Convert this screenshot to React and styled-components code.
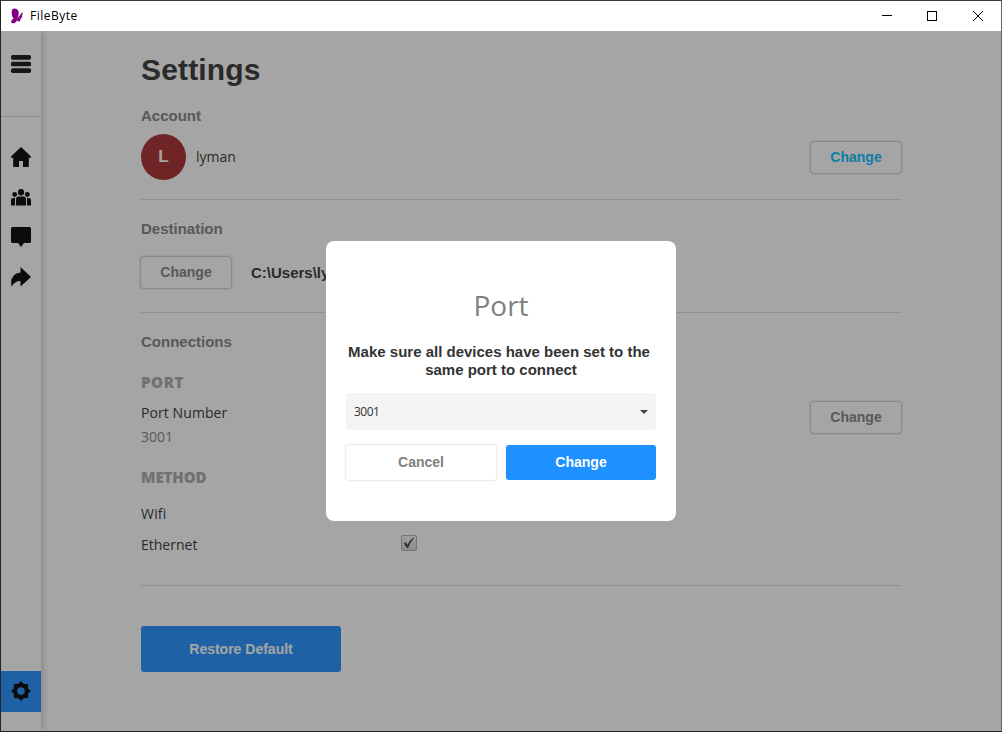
import React from "react";
import styled, { createGlobalStyle, css } from "styled-components";

const GlobalStyle = createGlobalStyle`
  *, *::before, *::after { box-sizing: border-box; }
  body { margin: 0; overflow: hidden; background: #231f20; }
  h1, h2, h3, p { margin: 0; }
  button { font: inherit; }
`;

const humanist = `"Open Sans", "Noto Sans", sans-serif`;
const grotesk = `"Liberation Sans", Arial, sans-serif`;

const Window = styled.div`
  width: 1002px;
  height: 732px;
  display: flex;
  flex-direction: column;
  border: 1px solid #262324;
  border-right-color: #656565;
  border-top-color: #3a3839;
  font-family: ${grotesk};
  color: #333;
`;

const TitleBar = styled.header`
  flex: 0 0 30px;
  display: flex;
  align-items: center;
  background: #fff;
  padding-left: 9px;
`;

const AppName = styled.span`
  flex: 1;
  margin-left: 6px;
  font: 12px/16px ${humanist};
  letter-spacing: 0.5px;
  color: #000;
`;

const WindowButton = styled.button`
  width: 46px;
  height: 30px;
  padding: 0;
  border: 0;
  background: none;
  display: grid;
  place-items: center;
`;

const Body = styled.div`
  position: relative;
  flex: 1;
  display: flex;
  background: #fff;
  overflow: hidden;
`;

const Sidebar = styled.nav`
  flex: 0 0 40px;
  display: flex;
  flex-direction: column;
  background: #fff;
  box-shadow: 0 0 8px rgba(0, 0, 0, 0.3);
`;

const MenuArea = styled.div`
  height: 86px;
  border-bottom: 1px solid #d8d8d8;
  display: flex;
  justify-content: center;
  padding-top: 24px;
  margin-bottom: 20px;
`;

const NavItem = styled.div`
  height: 40px;
  display: grid;
  place-items: center;
  ${(p) => p.$active && css`
    height: 41px;
    margin: auto 0 19px;
    padding-bottom: 1px;
    background: #1e90ff;
  `}
`;

const Main = styled.main`
  flex: 1;
  padding: 21px 100px 0;
`;

const PageTitle = styled.h1`
  height: 55px;
  font-size: 30px;
  line-height: 36px;
  letter-spacing: 0.15px;
`;

const Section = styled.section`
  height: ${(p) => p.$height}px;
  border-bottom: 1px solid #dcdcdc;
  margin-bottom: 20px;
`;

const SectionTitle = styled.h2`
  font-size: 15px;
  line-height: 18px;
  color: #808080;
`;

const Row = styled.div`
  display: flex;
  align-items: ${(p) => p.$align || "center"};
  height: ${(p) => p.$height}px;
  margin-top: ${(p) => p.$top || 0}px;
`;

const Avatar = styled.div`
  width: 45px;
  height: 46px;
  border-radius: 50%;
  background: brown;
  color: #fff;
  display: grid;
  place-items: center;
  font-size: 17px;
  font-weight: bold;
  margin-right: 10px;
`;

const Label = styled.span`
  font: 14px/20px ${humanist};
  letter-spacing: ${(p) => p.$spacing || 0}px;
  color: ${(p) => (p.$muted ? "#808080" : "#333")};
`;

const Path = styled.span`
  margin-left: 19px;
  font-size: 15px;
  line-height: 18px;
  font-weight: bold;
`;

const OutlineButton = styled.button`
  width: 92px;
  height: 33px;
  padding: 0 0 1px;
  margin-top: ${(p) => p.$top || 0}px;
  margin-left: ${(p) => (p.$end ? "auto" : "-1px")};
  margin-right: ${(p) => (p.$end ? "-1px" : 0)};
  border: 1px solid #d0d0d0;
  border-radius: 4px;
  background: #fff;
  box-shadow: 0 0 2px rgba(0, 0, 0, 0.2);
  font-size: 14px;
  font-weight: bold;
  color: ${(p) => (p.$accent ? "#00bfff" : "#808080")};
`;

const GroupTitle = styled.h3`
  font: 800 15px/20px ${humanist};
  letter-spacing: ${(p) => p.$spacing}px;
  color: #a9a9a9;
  margin-top: ${(p) => p.$top}px;
`;

const Stack = styled.div`
  display: flex;
  flex-direction: column;
  gap: 4px;
`;

const MethodRow = styled.div`
  display: grid;
  grid-template-columns: 260px 16px;
  align-items: center;
  height: 31px;
`;

const Checkbox = styled.span`
  width: 16px;
  height: 16px;
  margin-top: -4px;
  border: 1px solid #adadad;
  border-radius: 2px;
  background: linear-gradient(#f4f4f4, #d6d6d6);
  display: grid;
  place-items: center;
`;

const PrimaryButton = styled.button`
  width: ${(p) => p.$width}px;
  height: ${(p) => p.$height}px;
  padding: 0 0 ${(p) => p.$lift || 0}px;
  border: 0;
  border-radius: 3px;
  background: #1e90ff;
  color: #fff;
  font-size: 14px;
  font-weight: bold;
`;

const Overlay = styled.div`
  position: absolute;
  inset: 0;
  background: rgba(30, 30, 30, 0.4);
  display: flex;
  align-items: center;
  justify-content: center;
`;

const Dialog = styled.div`
  width: 350px;
  height: 280px;
  border-radius: 8px;
  background: #fff;
  padding: 43px 20px 0;
  display: flex;
  flex-direction: column;
`;

const DialogTitle = styled.h2`
  font: 400 28px/42px ${humanist};
  color: #808080;
  text-align: center;
`;

const DialogText = styled.p`
  margin: 17px -5px 0;
  font-size: 15px;
  line-height: 18px;
  font-weight: bold;
  text-align: center;

  span { margin-right: 4px; }
`;

const Select = styled.div`
  height: 37px;
  margin-top: 14px;
  padding: 0 8px;
  display: flex;
  align-items: center;
  justify-content: space-between;
  border-radius: 3px;
  background: #f4f4f4;
  font: 12px/18px ${humanist};
  letter-spacing: -0.5px;
`;

const Actions = styled.div`
  display: flex;
  justify-content: space-between;
  align-items: center;
  margin-top: 15px;
`;

const CancelButton = styled.button`
  width: 150px;
  height: 35px;
  padding: 0 0 2px;
  border: 0;
  border-radius: 3px;
  background: #fff;
  box-shadow: 0 0 0 1px #ececec, 0 0 3px rgba(0, 0, 0, 0.12);
  color: #808080;
  font-size: 14px;
  font-weight: bold;
`;

const Logo = () => (
  <svg width="14" height="18" viewBox="0 0 14 18" fill="#800080">
    <path d="M2.200 2.500C3.500.5 7.800 1.500 8.600 4.500c.4 2 .2 3.500-.8 5.300.2 2.500-.8 4.500-2.800 5.900-1.500 1-3.800.8-3.800-.7 0-1.500 1-2.800 2.500-3.600C1.500 9.700 1.300 4.500 2.200 2.500Z" />
    <path d="M7 13.500 12.500 6M8.800 9.500v5L12 8.500" stroke="#800080" strokeWidth="1.300" fill="none" />
  </svg>
);

const MenuIcon = () => (
  <svg width="20" height="18" viewBox="0 0 20 18" fill="#111">
    <rect width="20" height="4.700" rx="1.700" />
    <rect y="6.800" width="20" height="4.400" rx="1.500" />
    <rect y="13.300" width="20" height="4.700" rx="1.700" />
  </svg>
);

const HomeIcon = () => (
  <svg width="20" height="20" viewBox="0 0 20 20">
    <path d="M10 0 20 9.500v1.300h-2.200V20H12v-6H8v6H2.200v-9.200H0V9.500Z" />
  </svg>
);

const PeopleIcon = () => (
  <svg width="20" height="17" viewBox="0 0 20 17">
    <ellipse cx="10" cy="3.300" rx="3.100" ry="3.200" />
    <circle cx="3.700" cy="5.500" r="2.400" />
    <circle cx="16.300" cy="5.500" r="2.400" />
    <path d="M5 16.500v-6.300Q5 7.500 7.500 7.500h5Q15 7.500 15 10.200v6.300Z" />
    <path d="M0 16.500v-5.300Q0 9 2.200 9H4v7.500ZM20 16.500v-5.300Q20 9 17.800 9H16v7.500Z" />
  </svg>
);

const ChatIcon = () => (
  <svg width="20" height="20" viewBox="0 0 20 20">
    <path d="M1.500 0h17Q20 0 20 1.500v13q0 1.500-1.500 1.500H13l-3 4-3-4H1.500Q0 16 0 14.500v-13Q0 0 1.500 0Z" />
  </svg>
);

const ShareIcon = () => (
  <svg width="20" height="20" viewBox="0 0 20 20">
    <path d="M9.500 0 20 10 9.500 19.500V14q-5-.5-9 5.500Q-1.500 6.500 9.500 5.500Z" />
  </svg>
);

const GearIcon = () => (
  <svg width="20" height="20" viewBox="0 0 20 20" fillRule="evenodd">
    <path d="M10 0 12.600 2.800 17.100 2.900 17.200 7.400 20 10 17.200 12.600 17.100 17.100 12.600 17.200 10 20 7.400 17.200 2.900 17.100 2.800 12.600 0 10 2.800 7.400 2.900 2.900 7.400 2.800ZM10 6.200a3.800 3.800 0 1 0 0 7.600a3.800 3.800 0 1 0 0-7.600Z" />
  </svg>
);

const navIcons = [HomeIcon, PeopleIcon, ChatIcon, ShareIcon];

export default function App() {
  return (
    <Window>
      <GlobalStyle />
      <TitleBar>
        <Logo />
        <AppName>FileByte</AppName>
        <WindowButton aria-label="Minimize">
          <svg width="11" height="10"><path d="M1 4.500h10" stroke="#000" /></svg>
        </WindowButton>
        <WindowButton aria-label="Maximize">
          <svg width="10" height="10"><rect x=".5" y=".5" width="9" height="9" fill="none" stroke="#000" /></svg>
        </WindowButton>
        <WindowButton aria-label="Close">
          <svg width="10" height="10"><path d="m0 0 10 10M10 0 0 10" stroke="#000" /></svg>
        </WindowButton>
      </TitleBar>
      <Body>
        <Sidebar>
          <MenuArea><MenuIcon /></MenuArea>
          {navIcons.map((Icon, i) => (
            <NavItem key={i}><Icon /></NavItem>
          ))}
          <NavItem $active><GearIcon /></NavItem>
        </Sidebar>
        <Main>
          <PageTitle>Settings</PageTitle>
          <Section $height={93}>
            <SectionTitle>Account</SectionTitle>
            <Row $height={46} $top={9}>
              <Avatar>L</Avatar>
              <Label>lyman</Label>
              <OutlineButton $accent $end $top={1}>Change</OutlineButton>
            </Row>
          </Section>
          <Section $height={93}>
            <SectionTitle>Destination</SectionTitle>
            <Row $height={33} $top={18}>
              <OutlineButton>Change</OutlineButton>
              <Path>C:\Users\lyman</Path>
            </Row>
          </Section>
          <Section $height={253}>
            <SectionTitle>Connections</SectionTitle>
            <GroupTitle $top={21} $spacing={0.6}>PORT</GroupTitle>
            <Row $height={44} $top={11} $align="flex-start">
              <Stack>
                <Label $spacing={0.08}>Port Number</Label>
                <Label $muted>3001</Label>
              </Stack>
              <OutlineButton $end $top={-2}>Change</OutlineButton>
            </Row>
            <GroupTitle $top={20} $spacing={-0.1}>METHOD</GroupTitle>
            <Row $height={11} />
            <MethodRow><Label $spacing={0.2}>Wifi</Label></MethodRow>
            <MethodRow>
              <Label>Ethernet</Label>
              <Checkbox>
                <svg width="12" height="12" viewBox="0 0 12 12">
                  <path d="M1 6.500 2.500 5 4.500 8Q6.500 3.500 10.500.5L11 1Q7 5.500 5 11H4Z" fill="#333" />
                </svg>
              </Checkbox>
            </MethodRow>
          </Section>
          <Row $height={46} $top={40}>
            <PrimaryButton $width={200} $height={46}>Restore Default</PrimaryButton>
          </Row>
        </Main>
        <Overlay>
          <Dialog>
            <DialogTitle>Port</DialogTitle>
            <DialogText>
              <span>Make sure all devices have been set to the</span> same port to connect
            </DialogText>
            <Select>
              <span>3001</span>
              <svg width="8" height="4"><path d="M0 0h8L4 4Z" fill="#444" /></svg>
            </Select>
            <Actions>
              <CancelButton>Cancel</CancelButton>
              <PrimaryButton $width={150} $height={35} $lift={2}>Change</PrimaryButton>
            </Actions>
          </Dialog>
        </Overlay>
      </Body>
    </Window>
  );
}
